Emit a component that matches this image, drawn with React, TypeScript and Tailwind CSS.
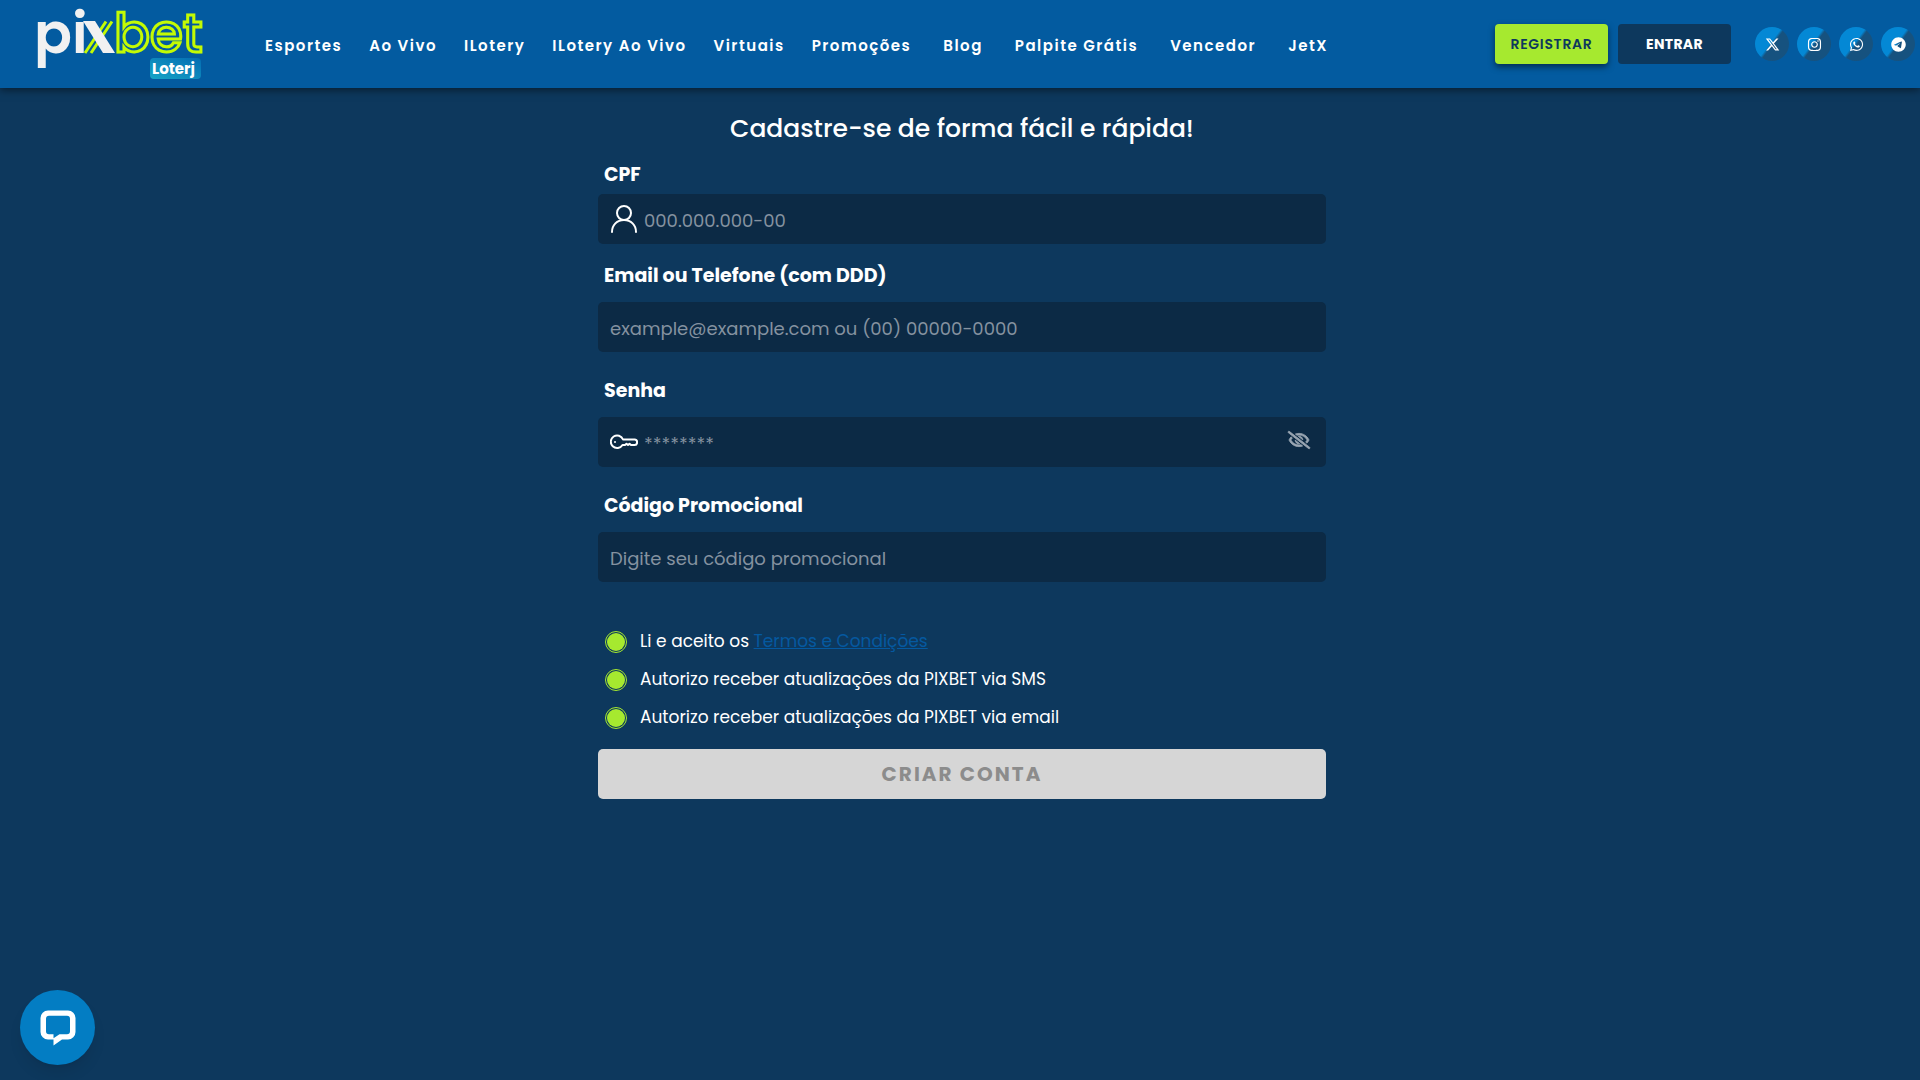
import { useState } from "react";
import type { ReactNode } from "react";
import { FaRegEyeSlash } from "react-icons/fa";
import { FaInstagram, FaTelegram, FaWhatsapp, FaXTwitter } from "react-icons/fa6";

const NAV_LINKS: { label: string; wide?: boolean }[] = [
  { label: "Esportes" },
  { label: "Ao Vivo" },
  { label: "ILotery" },
  { label: "ILotery Ao Vivo" },
  { label: "Virtuais" },
  { label: "Promoções" },
  { label: "Blog", wide: true },
  { label: "Palpite Grátis", wide: true },
  { label: "Vencedor", wide: true },
  { label: "JetX", wide: true },
];

const SOCIALS = [
  { label: "X", Icon: FaXTwitter },
  { label: "Instagram", Icon: FaInstagram },
  { label: "WhatsApp", Icon: FaWhatsapp },
  { label: "Telegram", Icon: FaTelegram },
];

// ─── Icons ─────────────────────────────────────────────────────────────────

function Logo() {
  return (
    <svg viewBox="0 0 180 88" className="h-[88px] w-[180px] overflow-visible" role="img" aria-label="Pixbet Loterj">
      <defs>
        <linearGradient id="badge" x1="0" y1="1" x2="1" y2="0">
          <stop offset="0" stopColor="#16a5c6" />
          <stop offset="1" stopColor="#046cb2" />
        </linearGradient>
      </defs>
      <g fontFamily="Poppins, Inter, sans-serif">
        <text x="4" y="53" fill="#f1f1f1" fontWeight="600" fontSize="56">
          pi
        </text>
        <text x="84" y="52" fontWeight="500" fontSize="53" fill="#035ba0" stroke="#c3fb04" strokeWidth="3">
          bet
        </text>
      </g>
      {/* crossed bars between the two halves of the wordmark */}
      <path d="M55 53 76 21.500M61 53 82 21.500" stroke="#c3fb04" strokeWidth="3" fill="none" />
      <path d="M53 21h12l20 32H73z" fill="#f1f1f1" />
      <rect x="120" y="58" width="51" height="21" rx="4" fill="url(#badge)" />
      <text x="122" y="74" fill="#fff" fontFamily="Poppins, Inter, sans-serif" fontWeight="700" fontSize="15">
        Loterj
      </text>
    </svg>
  );
}

function UserIcon() {
  return (
    <svg viewBox="0 0 28 28" className="size-7" fill="none" stroke="#fff" strokeWidth="2" strokeLinecap="round">
      <circle cx="14" cy="8" r="7" />
      <path d="M2 27c0-7 5-12 12-12s12 5 12 12" />
    </svg>
  );
}

function KeyIcon() {
  return (
    <svg viewBox="0 0 28 16" className="h-4 w-7" fill="none" stroke="#fff" strokeWidth="2" strokeLinejoin="round">
      <path d="M13 5.500A6.300 6.300 0 1 0 12.500 11H15l1.500-1.300L18 11l1.500-1.300L21 11h3.700c1.500 0 2.400-1.200 2.400-2.700s-.9-2.800-2.400-2.800z" />
      <circle cx="5" cy="8" r="1" fill="#fff" stroke="none" />
    </svg>
  );
}

function ChatIcon() {
  return (
    <svg viewBox="0 0 36 36" className="size-9">
      <path
        fill="#fff"
        fillRule="evenodd"
        d="M8 .5h20a7.500 7.500 0 0 1 7.500 7.500v14a7.500 7.500 0 0 1-7.500 7.500h-6L13.500 35.500v-6H8A7.500 7.500 0 0 1 .5 22V8A7.500 7.500 0 0 1 8 .5zM9 5.800a3 3 0 0 0-3 3v12.400a3 3 0 0 0 3 3h4.500v4l6-4H27a3 3 0 0 0 3-3V8.800a3 3 0 0 0-3-3z"
      />
    </svg>
  );
}

// ─── Header ────────────────────────────────────────────────────────────────

function Header() {
  return (
    <header className="relative flex h-[88px] items-center bg-[#035ba0] pr-[5px] pl-[30px] shadow-[0_2px_8px_rgba(0,0,0,0.5)]">
      <a href="#" className="shrink-0">
        <Logo />
      </a>
      <nav className="ml-[55px] flex items-center gap-[27px] pt-1">
        {NAV_LINKS.map(({ label, wide }) => (
          <a
            key={label}
            href="#"
            className={`text-[15px] font-semibold tracking-widest whitespace-nowrap text-white ${wide ? "ml-[5px]" : ""}`}
          >
            {label}
          </a>
        ))}
      </nav>
      <div className="ml-auto flex items-center gap-2.5">
        <button
          type="button"
          className="h-10 w-[113px] rounded bg-[#a6e92f] text-[14px] font-semibold tracking-wider text-[#0d385d] shadow-[0_3px_6px_rgba(0,0,0,0.5)]"
        >
          REGISTRAR
        </button>
        <button
          type="button"
          className="h-10 w-[113px] rounded bg-[#0d385d] text-[14px] font-bold tracking-wide text-white"
        >
          ENTRAR
        </button>
      </div>
      <div className="ml-6 flex items-center gap-2">
        {SOCIALS.map(({ label, Icon }) => (
          <a
            key={label}
            href="#"
            aria-label={label}
            className="flex size-[34px] items-center justify-center rounded-full bg-[linear-gradient(127deg,#0488d5_46%,#16527f_52%)] text-white"
          >
            <Icon className="size-[15px]" />
          </a>
        ))}
      </div>
    </header>
  );
}

// ─── Form ──────────────────────────────────────────────────────────────────

interface FieldProps {
  id: string;
  label: string;
  placeholder: string;
  type?: string;
  icon?: ReactNode;
  action?: ReactNode;
  className?: string;
}

function Field({ id, label, placeholder, type = "text", icon, action, className = "gap-3" }: FieldProps) {
  return (
    <div className={`flex flex-col ${className}`}>
      <label htmlFor={id} className="px-1.5 text-[19px] leading-7 font-bold text-white">
        {label}
      </label>
      <div className="flex h-[50px] items-center gap-1.5 rounded-[5px] bg-[#0c2a45] px-3">
        {icon}
        <input
          id={id}
          type={type}
          placeholder={placeholder}
          className="h-full min-w-0 flex-1 bg-transparent pt-0.5 text-lg text-white outline-none placeholder:text-[#8592a0]"
        />
        {action}
      </div>
    </div>
  );
}

function Consent({ id, children }: { id: string; children: ReactNode }) {
  const [checked, setChecked] = useState(true);

  return (
    <div className="flex h-7 items-center gap-[13px]">
      <input
        id={id}
        type="checkbox"
        checked={checked}
        onChange={(e) => setChecked(e.target.checked)}
        className="size-[22px] appearance-none rounded-full border border-[#a6e92f] p-px checked:bg-[#a6e92f] checked:bg-clip-content"
      />
      <label htmlFor={id} className="text-[17px] text-white">
        {children}
      </label>
    </div>
  );
}

function SignUpForm() {
  const [showPassword, setShowPassword] = useState(false);

  return (
    <form className="mx-auto flex w-full max-w-[728px] flex-col pt-[25px]" onSubmit={(e) => e.preventDefault()}>
      <h1 className="text-center text-[25px] leading-8 font-medium text-white">Cadastre-se de forma fácil e rápida!</h1>

      <div className="mt-4 flex flex-col gap-[18px]">
        <Field id="cpf" label="CPF" placeholder="000.000.000-00" icon={<UserIcon />} className="gap-[5px]" />
        <div className="flex flex-col gap-[25px]">
          <Field
            id="contact"
            label="Email ou Telefone (com DDD)"
            placeholder="example@example.com ou (00) 00000-0000"
          />
          <Field
            id="password"
            label="Senha"
            placeholder="********"
            type={showPassword ? "text" : "password"}
            icon={<KeyIcon />}
            action={
              <button
                type="button"
                aria-label="Mostrar senha"
                onClick={() => setShowPassword((v) => !v)}
                className="px-1 pb-1 text-[#9aa6b3]"
              >
                <FaRegEyeSlash className="size-[22px] overflow-visible stroke-current stroke-[24]" />
              </button>
            }
          />
          <Field id="promo" label="Código Promocional" placeholder="Digite seu código promocional" />
        </div>
      </div>

      <div className="mt-[46px] flex flex-col gap-2.5 px-[7px]">
        <Consent id="terms">
          Li e aceito os{" "}
          <a href="#" className="text-[#0559a0] underline">
            Termos e Condições
          </a>
        </Consent>
        <Consent id="sms">Autorizo receber atualizações da PIXBET via SMS</Consent>
        <Consent id="email">Autorizo receber atualizações da PIXBET via email</Consent>
      </div>

      <button
        type="submit"
        className="mt-[17px] h-[50px] w-full rounded-[5px] bg-[#d6d6d6] text-xl font-bold tracking-widest text-[#8c8c8c]"
      >
        CRIAR CONTA
      </button>
    </form>
  );
}

export default function App() {
  return (
    <div className="min-h-screen bg-[#0d385d] font-[Poppins,Inter,sans-serif]">
      <Header />
      <main className="pl-1">
        <SignUpForm />
      </main>
      <button
        type="button"
        aria-label="Abrir chat"
        className="fixed bottom-[15px] left-5 flex size-[75px] items-center justify-center rounded-full bg-[#037dc3] shadow-lg"
      >
        <ChatIcon />
      </button>
    </div>
  );
}
